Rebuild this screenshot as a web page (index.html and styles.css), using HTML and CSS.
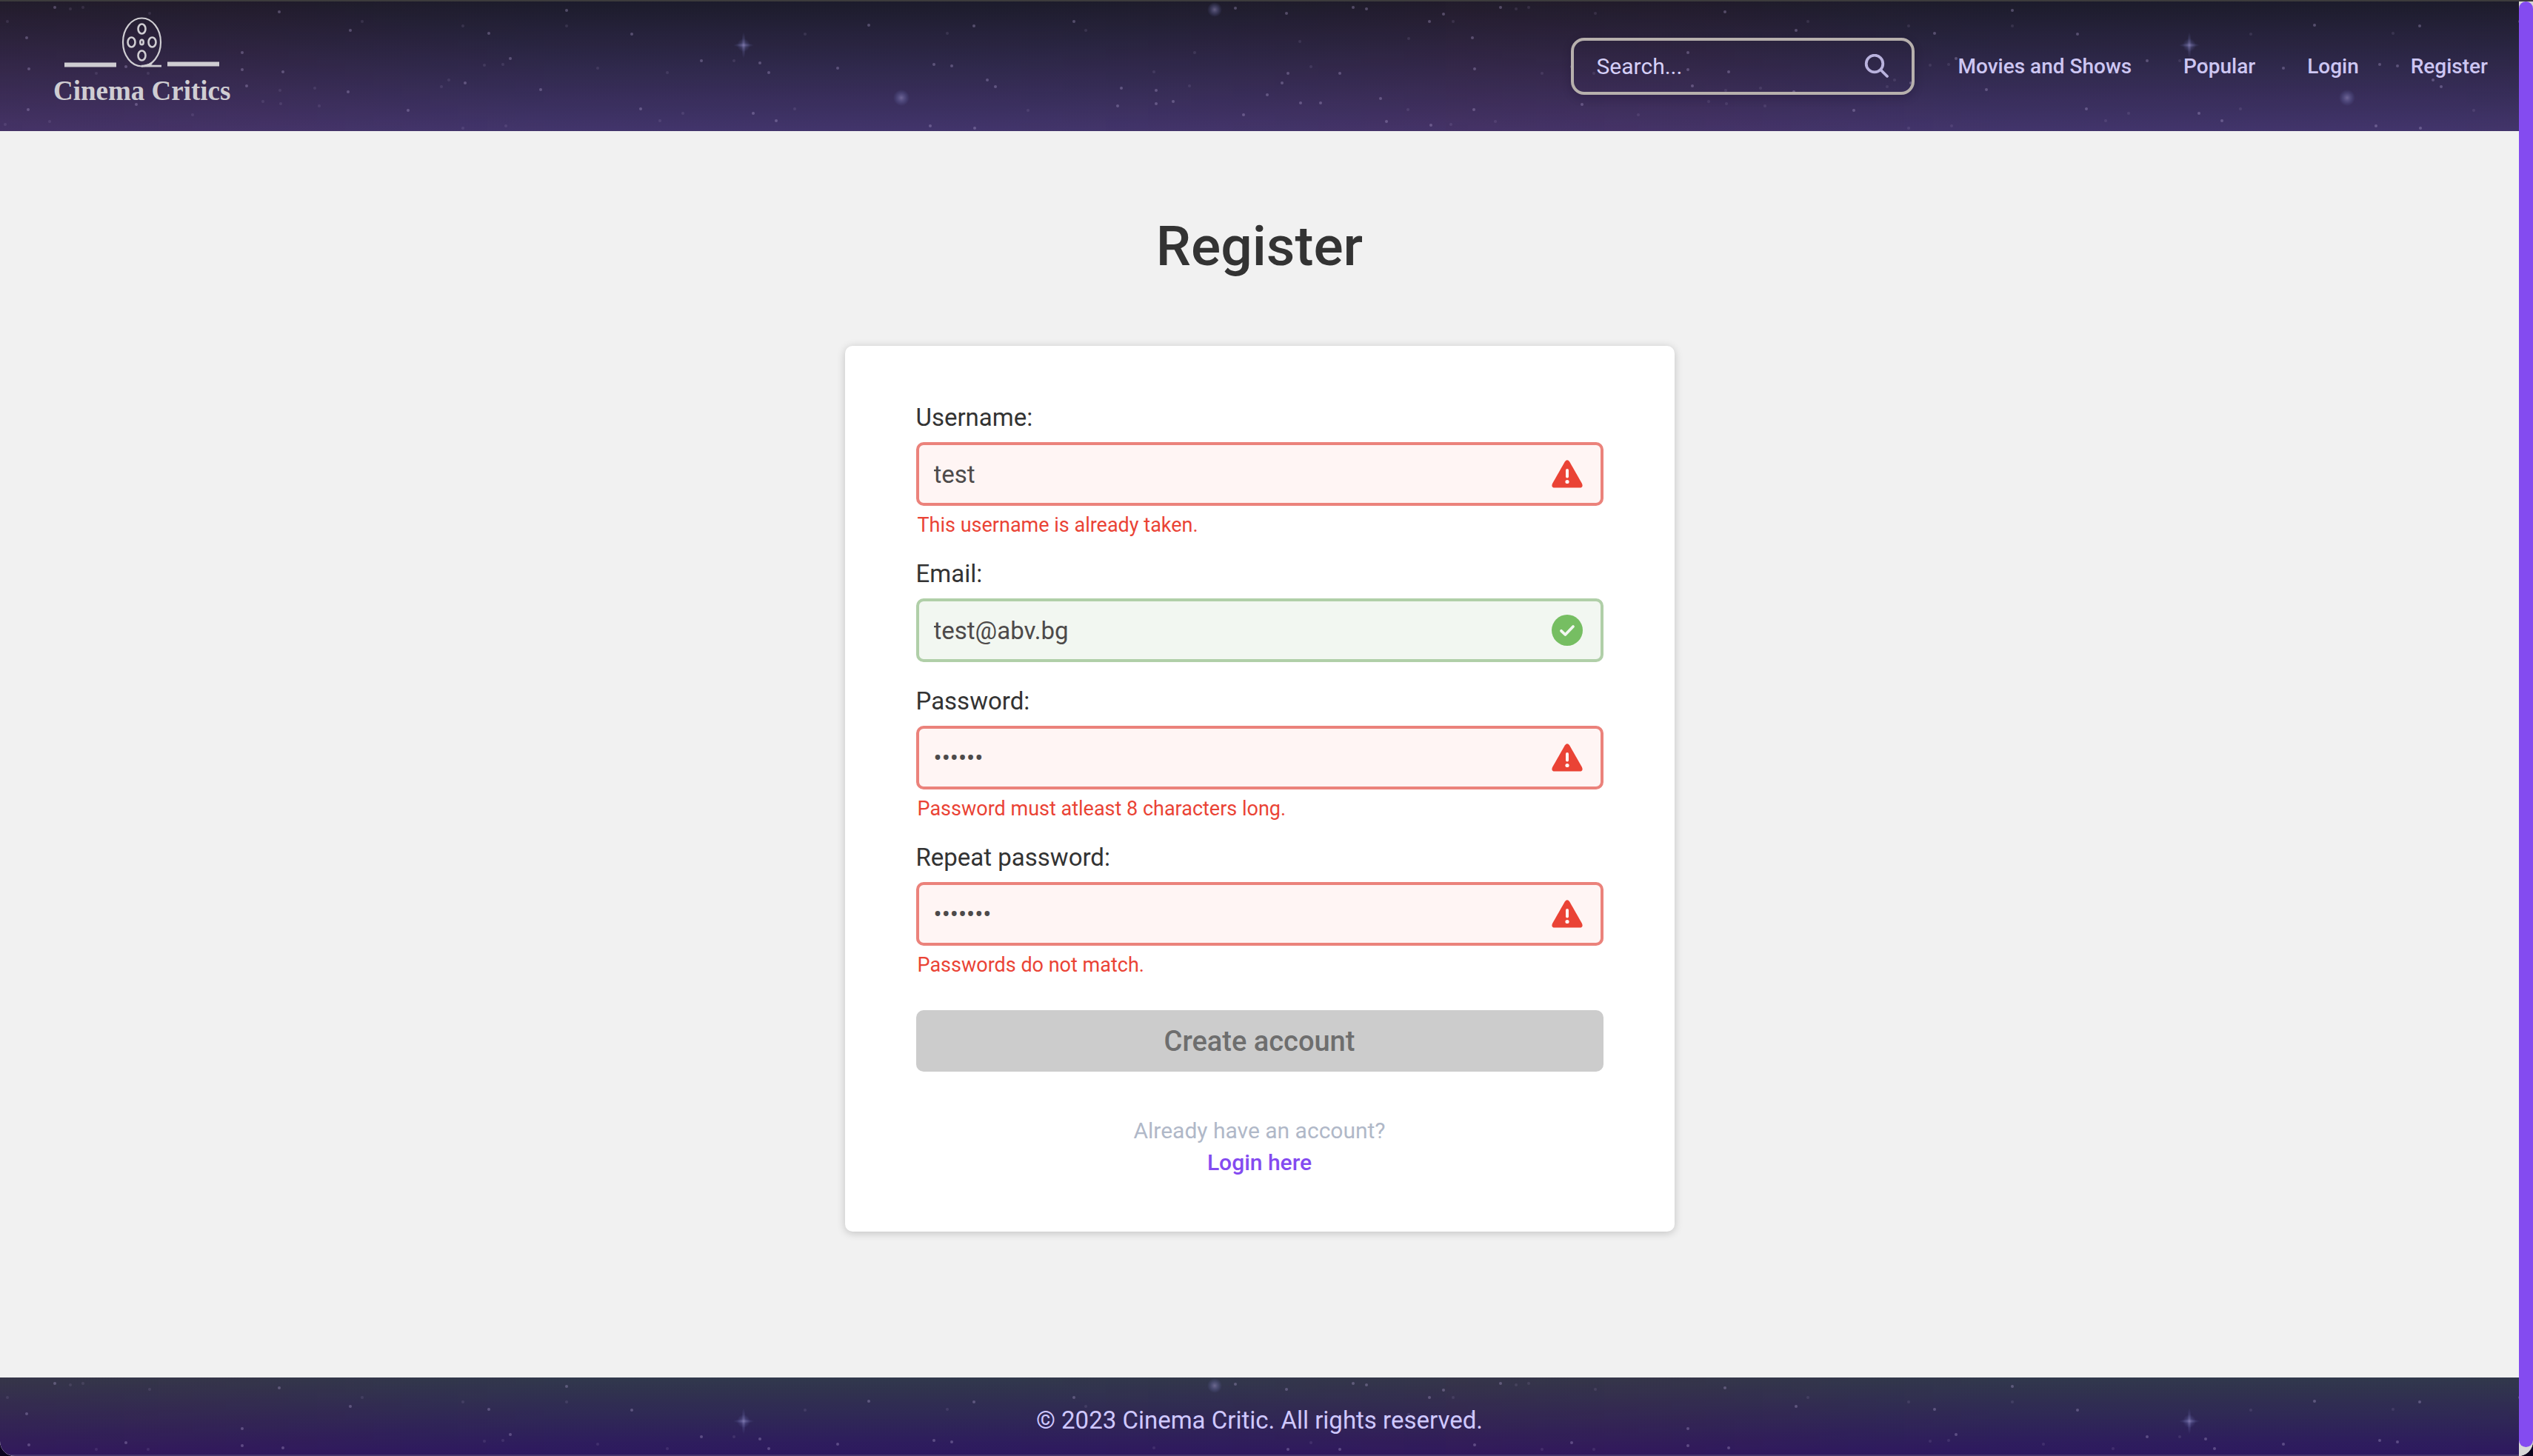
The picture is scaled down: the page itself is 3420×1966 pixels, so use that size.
FILE: index.html
```html
<!DOCTYPE html>
<html lang="en">
<head>
<meta charset="utf-8">
<meta name="viewport" content="width=device-width, initial-scale=1">
<title>Register - Cinema Critics</title>
<link rel="stylesheet" href="styles.css">
</head>
<body>
<div class="window">
  <div class="page">
    <header class="header">
      <svg class="sky" aria-hidden="true">
        <defs>
          <linearGradient id="haze">
            <stop offset="0" stop-color="#4a2840" stop-opacity=".13"/>
            <stop offset=".18" stop-color="#4a2840" stop-opacity=".1"/>
            <stop offset=".38" stop-color="#233a5e" stop-opacity=".06"/>
            <stop offset=".7" stop-color="#233a5e" stop-opacity=".06"/>
            <stop offset="1" stop-color="#4a2840" stop-opacity=".1"/>
          </linearGradient>
          <radialGradient id="glow">
            <stop offset="0" stop-color="#a99fd0" stop-opacity=".5"/>
            <stop offset=".35" stop-color="#8c8ac8" stop-opacity=".35"/>
            <stop offset="1" stop-color="#6c78c8" stop-opacity="0"/>
          </radialGradient>
          <radialGradient id="twinkle">
            <stop offset="0" stop-color="#9a90c4" stop-opacity=".4"/>
            <stop offset="1" stop-color="#6c78c8" stop-opacity="0"/>
          </radialGradient>
          <pattern id="stars" width="1952" height="176" patternUnits="userSpaceOnUse">
            <rect width="1952" height="176" fill="url(#haze)"/>
            <g class="dim">
              <circle cx="95" cy="10" r="2"/><circle cx="112" cy="8" r="2"/><circle cx="202" cy="16" r="2"/><circle cx="489" cy="27" r="2"/>
              <circle cx="625" cy="33" r="2"/><circle cx="130" cy="97" r="2"/><circle cx="200" cy="97" r="2"/><circle cx="378" cy="120" r="2"/>
              <circle cx="425" cy="117" r="2"/><circle cx="379" cy="138" r="2"/><circle cx="355" cy="135" r="2"/><circle cx="431" cy="141" r="2"/>
              <circle cx="606" cy="106" r="2"/><circle cx="596" cy="115" r="2"/><circle cx="679" cy="85" r="2"/><circle cx="654" cy="86" r="2"/>
              <circle cx="260" cy="153" r="2"/><circle cx="67" cy="162" r="2"/><circle cx="7" cy="166" r="2"/><circle cx="683" cy="168" r="2"/>
              <circle cx="625" cy="171" r="2"/><circle cx="10" cy="27" r="2"/><circle cx="765" cy="33" r="2"/><circle cx="922" cy="151" r="2"/>
              <circle cx="891" cy="161" r="2"/><circle cx="807" cy="90" r="2"/><circle cx="901" cy="96" r="2"/><circle cx="991" cy="80" r="2"/>
              <circle cx="1087" cy="44" r="2"/><circle cx="1279" cy="43" r="2"/><circle cx="1466" cy="39" r="2"/><circle cx="1902" cy="50" r="2"/>
              <circle cx="1755" cy="54" r="2"/><circle cx="1613" cy="69" r="2"/><circle cx="1770" cy="88" r="2"/><circle cx="1558" cy="95" r="2"/>
              <circle cx="1901" cy="146" r="2"/><circle cx="1388" cy="147" r="2"/><circle cx="1073" cy="145" r="2"/><circle cx="1606" cy="114" r="2"/>
            </g>
            <g class="lit">
              <circle cx="74" cy="8" r="2"/><circle cx="377" cy="14" r="2"/><circle cx="473" cy="39" r="2"/><circle cx="660" cy="43" r="2"/>
              <circle cx="36" cy="49" r="2"/><circle cx="327" cy="69" r="2"/><circle cx="39" cy="91" r="2"/><circle cx="170" cy="88" r="2"/>
              <circle cx="327" cy="92" r="2"/><circle cx="382" cy="95" r="2"/><circle cx="333" cy="114" r="2"/><circle cx="470" cy="122" r="2"/>
              <circle cx="551" cy="147" r="2"/><circle cx="628" cy="110" r="2"/><circle cx="689" cy="77" r="2"/><circle cx="184" cy="139" r="2"/>
              <circle cx="38" cy="146" r="2"/><circle cx="765" cy="12" r="2"/><circle cx="853" cy="44" r="2"/><circle cx="730" cy="119" r="2"/>
              <circle cx="865" cy="145" r="2"/><circle cx="947" cy="80" r="2"/><circle cx="1017" cy="151" r="2"/><circle cx="1048" cy="161" r="2"/>
              <circle cx="1173" cy="32" r="2"/><circle cx="1315" cy="33" r="2"/><circle cx="1026" cy="83" r="2"/><circle cx="1038" cy="96" r="2"/>
              <circle cx="1131" cy="90" r="2"/><circle cx="1261" cy="85" r="2"/><circle cx="1285" cy="87" r="2"/><circle cx="1333" cy="106" r="2"/>
              <circle cx="1344" cy="115" r="2"/><circle cx="1256" cy="168" r="2"/><circle cx="1316" cy="171" r="2"/><circle cx="1450" cy="27" r="2"/>
              <circle cx="1668" cy="9" r="2"/><circle cx="1737" cy="16" r="2"/><circle cx="1827" cy="8" r="2"/><circle cx="1845" cy="10" r="2"/>
              <circle cx="1930" cy="27" r="2"/><circle cx="1949" cy="17" r="2"/><circle cx="1739" cy="97" r="2"/><circle cx="1809" cy="97" r="2"/>
              <circle cx="1731" cy="110" r="2"/><circle cx="1514" cy="117" r="2"/><circle cx="1561" cy="120" r="2"/><circle cx="1711" cy="126" r="2"/>
              <circle cx="1864" cy="131" r="2"/><circle cx="1584" cy="135" r="2"/><circle cx="1561" cy="138" r="2"/><circle cx="1509" cy="141" r="2"/>
              <circle cx="1756" cy="137" r="2"/><circle cx="1783" cy="137" r="2"/><circle cx="1679" cy="153" r="2"/><circle cx="1872" cy="162" r="2"/>
              <circle cx="1932" cy="167" r="2"/>
            </g>
            <circle cx="1640" cy="11" r="10" fill="url(#glow)"/>
            <circle cx="1217" cy="130" r="11" fill="url(#glow)"/>
            <circle cx="1004" cy="59" r="9" fill="url(#twinkle)"/>
            <ellipse cx="1004" cy="59" rx="14" ry="3" fill="url(#twinkle)"/>
            <ellipse cx="1004" cy="59" rx="3" ry="18" fill="url(#twinkle)"/>
          </pattern>
        </defs>
        <rect width="100%" height="100%" fill="url(#stars)"/>
      </svg>
      <a class="logo" href="#">
        <svg class="reel" viewBox="0 0 210 70" width="210" height="70" fill="none" stroke="#cfcdd2" aria-hidden="true">
          <path d="M0 64.500H70M139 63.500H209" stroke-width="6"/>
          <ellipse cx="104.500" cy="34" rx="25.500" ry="32.500" stroke-width="2.200"/>
          <g stroke-width="2.600">
            <ellipse cx="104.500" cy="16" rx="5" ry="6.500"/>
            <ellipse cx="90.500" cy="34" rx="5" ry="6.500"/>
            <ellipse cx="118.500" cy="34" rx="5" ry="6.500"/>
            <ellipse cx="104.500" cy="52" rx="5" ry="6.500"/>
            <ellipse cx="104.500" cy="34" rx="2.200" ry="3.200"/>
          </g>
          <path d="M104 66.300Q112 66 118 62.500M104 66.200H131" stroke-width="2.800"/>
        </svg>
        <span class="logo-name">Cinema Critics</span>
      </a>
      <form class="search" role="search">
        <input class="search-input" type="search" placeholder="Search..." aria-label="Search">
        <button class="search-button" type="button" aria-label="Search">
          <svg viewBox="0 0 34 34" width="34" height="34" fill="none" stroke="#b9b2dd" stroke-linecap="round" aria-hidden="true"><circle cx="14" cy="13" r="11.300" stroke-width="3.800"/><path d="M22.500 21.500l8.500 8.500" stroke-width="3.800"/></svg>
        </button>
      </form>
      <nav class="nav">
        <a href="#">Movies and Shows</a>
        <a href="#">Popular</a>
        <a href="#">Login</a>
        <a href="#">Register</a>
      </nav>
    </header>

    <main class="main">
      <h1 class="title">Register</h1>
      <form class="card">
        <div class="field">
          <label for="username">Username:</label>
          <div class="control invalid">
            <input id="username" type="text" value="test">
            <svg class="mark" viewBox="0 0 42 42" aria-hidden="true"><path d="M17.800 4.500Q21 0 24.200 4.500L41 34Q43 39.500 38 39.500H4Q-1 39.500 1 34Z" fill="#ea4335"/><path d="M21 16v8.500" stroke="#fff4f3" stroke-width="4" stroke-linecap="round"/><circle cx="21" cy="31.500" r="2.600" fill="#fff4f3"/></svg>
          </div>
          <p class="error">This username is already taken.</p>
        </div>
        <div class="field">
          <label for="email">Email:</label>
          <div class="control valid">
            <input id="email" type="text" value="test@abv.bg">
            <svg class="mark" viewBox="0 0 42 42" aria-hidden="true"><circle cx="21" cy="21" r="21" fill="#76be62"/><path d="M13 21.800l5.400 5.200L29 16" fill="none" stroke="#f2f7f1" stroke-width="3.800" stroke-linecap="round" stroke-linejoin="round"/></svg>
          </div>
        </div>
        <div class="field">
          <label for="password">Password:</label>
          <div class="control invalid">
            <input id="password" type="password" value="secret">
            <svg class="mark" viewBox="0 0 42 42" aria-hidden="true"><path d="M17.800 4.500Q21 0 24.200 4.500L41 34Q43 39.500 38 39.500H4Q-1 39.500 1 34Z" fill="#ea4335"/><path d="M21 16v8.500" stroke="#fff4f3" stroke-width="4" stroke-linecap="round"/><circle cx="21" cy="31.500" r="2.600" fill="#fff4f3"/></svg>
          </div>
          <p class="error">Password must atleast 8 characters long.</p>
        </div>
        <div class="field">
          <label for="repeat">Repeat password:</label>
          <div class="control invalid">
            <input id="repeat" type="password" value="secrets">
            <svg class="mark" viewBox="0 0 42 42" aria-hidden="true"><path d="M17.800 4.500Q21 0 24.200 4.500L41 34Q43 39.500 38 39.500H4Q-1 39.500 1 34Z" fill="#ea4335"/><path d="M21 16v8.500" stroke="#fff4f3" stroke-width="4" stroke-linecap="round"/><circle cx="21" cy="31.500" r="2.600" fill="#fff4f3"/></svg>
          </div>
          <p class="error">Passwords do not match.</p>
        </div>
        <button class="submit" type="submit" disabled>Create account</button>
        <p class="switch">Already have an account?<a href="#">Login here</a></p>
      </form>
    </main>

    <footer class="footer">
      <svg class="sky" aria-hidden="true"><rect width="100%" height="100%" fill="url(#stars)"/></svg>
      <p>© 2023 Cinema Critic. All rights reserved.</p>
    </footer>
  </div>
  <div class="scrollbar" aria-hidden="true"><div class="thumb"></div></div>
</div>
</body>
</html>
```
FILE: styles.css
```css
* { box-sizing: border-box; }

body {
  margin: 0;
  background: #0c0420;
  color: #333;
  font-family: Roboto, "Liberation Sans", sans-serif;
  font-size: 33px;
}

p, h1 { margin: 0; }
a { text-decoration: none; }
input, button { font: inherit; }

.window {
  display: flex;
  min-height: 100vh;
  border-top: 2px solid #3c3b3c;
  border-radius: 0 0 20px 20px;
  overflow: hidden;
  background: #d8d8d8;
}

.page {
  flex: 1;
  display: flex;
  flex-direction: column;
  background: #f1f1f1;
}

.scrollbar {
  display: flex;
  width: 19px;
  padding-bottom: 12px;
  background: #d8d8d8;
}
.thumb {
  flex: 1;
  border-radius: 10px;
  background: #844bf0;
}

.sky {
  position: absolute;
  inset: 0;
  width: 100%;
  height: 100%;
  z-index: -1;
}
.dim { fill: #b8a8d8; opacity: .13; }
.lit { fill: #b8a8d8; opacity: .33; }

.header {
  position: relative;
  z-index: 0;
  display: flex;
  align-items: center;
  height: 175px;
  padding: 0 42px 0 72px;
  background: linear-gradient(#1c1a28, #44346c);
}

.logo {
  display: flex;
  flex-direction: column;
  align-items: center;
  margin-right: auto;
  padding-bottom: 4px;
  color: #cfcdd2;
}
.reel { display: block; }
.logo-name {
  font: bold 37px/60px "Liberation Serif", serif;
}

.search {
  display: flex;
  align-items: center;
  width: 464px;
  height: 77px;
  margin-right: 59px;
  padding: 0 30px 0 31px;
  border: 4px solid #b7b0ad;
  border-radius: 18px;
  box-shadow: 0 4px 12px rgba(20, 10, 40, .25);
}
.search-input {
  flex: 1;
  min-width: 0;
  padding: 0;
  border: 0;
  background: none;
  color: #d6d0f8;
  font-size: 30px;
}
.search-input::placeholder { color: #d6d0f8; opacity: 1; }
.search-button {
  display: flex;
  padding: 0;
  border: 0;
  background: none;
}

.nav { display: flex; gap: 70px; }
.nav a {
  color: #cdc6f2;
  font-size: 28px;
  font-weight: 500;
}

.main {
  flex: 1;
  display: flex;
  flex-direction: column;
  align-items: center;
  padding: 99px 0;
}
.title {
  margin-bottom: 79px;
  font-size: 75px;
  font-weight: 500;
  line-height: 112px;
}

.card {
  width: 1120px;
  padding: 77px 96px 72px;
  border-radius: 10px;
  background: #fff;
  box-shadow: 0 2px 12px rgba(0, 0, 0, .2);
}
.field + .field { margin-top: 33px; }
.field label {
  display: block;
  margin-bottom: 13px;
  line-height: 40px;
}
.control {
  display: flex;
  align-items: center;
  height: 86px;
  padding: 0 24px 0 20px;
  border: 4px solid;
  border-radius: 10px;
}
.invalid { border-color: #eb827b; background: #fff5f4; }
.valid { border-color: #b0cfa8; background: #f2f7f1; }
.control input {
  flex: 1;
  min-width: 0;
  padding: 0;
  border: 0;
  background: none;
  color: #4d4a4a;
}
.mark { width: 42px; height: 42px; }
.error {
  padding: 14px 2px 0;
  color: #ea4335;
  font-size: 27px;
  line-height: 25px;
}
.submit {
  display: block;
  width: 100%;
  height: 83px;
  margin-top: 48px;
  border: 0;
  border-radius: 10px;
  background: #ccc;
  color: #6e6e6e;
  font-size: 38px;
  font-weight: 500;
}
.switch {
  display: flex;
  flex-direction: column;
  align-items: center;
  margin-top: 58px;
  color: #b0b8c8;
  font-size: 30px;
  line-height: 43px;
}
.switch a { color: #844bf0; font-weight: 500; }

.footer {
  position: relative;
  z-index: 0;
  padding: 36px 0 24px;
  border-bottom: 2px solid #44336a;
  background: linear-gradient(#32384a, #2e1660);
  color: #cfc8ff;
  line-height: 44px;
  text-align: center;
}
```
